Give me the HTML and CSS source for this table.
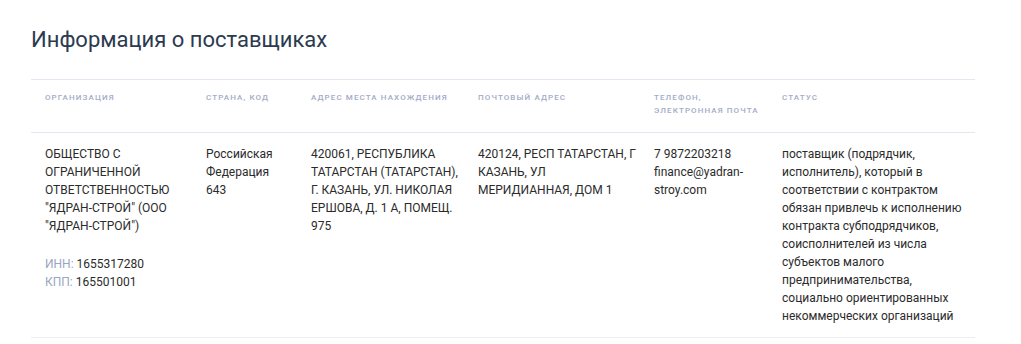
FILE: index.html
```html
<!DOCTYPE html>
<html lang="ru">
<head>
<meta charset="utf-8">
<link rel="stylesheet" href="styles.css">
</head>
<body>
<section class="panel">
  <h2 class="title">Информация о поставщиках</h2>
  <table class="suppliers">
    <colgroup>
      <col class="c1"><col class="c2"><col class="c3"><col class="c4"><col class="c5"><col class="c6">
    </colgroup>
    <thead>
      <tr>
        <th>Организация</th>
        <th>Страна, код</th>
        <th>Адрес места нахождения</th>
        <th>Почтовый адрес</th>
        <th>Телефон,<br>электронная почта</th>
        <th>Статус</th>
      </tr>
    </thead>
    <tbody>
      <tr>
        <td>
          <div>ОБЩЕСТВО С ОГРАНИЧЕННОЙ ОТВЕТСТВЕННОСТЬЮ "ЯДРАН-СТРОЙ" (ООО "ЯДРАН-СТРОЙ")</div>
          <div class="ids">
            <div><span class="lbl">ИНН:</span> 1655317280</div>
            <div><span class="lbl">КПП:</span> 165501001</div>
          </div>
        </td>
        <td>Российская Федерация<br>643</td>
        <td>420061, РЕСПУБЛИКА ТАТАРСТАН (ТАТАРСТАН), Г. КАЗАНЬ, УЛ. НИКОЛАЯ ЕРШОВА, Д. 1 А, ПОМЕЩ. 975</td>
        <td>420124, РЕСП ТАТАРСТАН, Г КАЗАНЬ, УЛ МЕРИДИАННАЯ, ДОМ 1</td>
        <td>7 9872203218<br>finance@yadran-stroy.com</td>
        <td>поставщик (подрядчик, исполнитель), который в соответствии с контрактом обязан привлечь к исполнению контракта субподрядчиков, соисполнителей из числа субъектов малого предпринимательства, социально ориентированных некоммерческих организаций</td>
      </tr>
    </tbody>
  </table>
</section>
</body>
</html>
```
FILE: styles.css
```css
* { box-sizing: border-box; }
body {
  margin: 0;
  background: #ffffff;
  font-family: Roboto, "Noto Sans", sans-serif;
  color: #2b2b2b;
}
.panel {
  padding: 24px 46px 0 31px;
}
.title {
  margin: 0 0 24px 0;
  font-size: 22px;
  font-weight: 400;
  line-height: 31px;
  color: #2c3a4f;
}
.suppliers {
  width: 944px;
  border-collapse: collapse;
  table-layout: fixed;
}
.c1 { width: 161px; }
.c2 { width: 105px; }
.c3 { width: 167px; }
.c4 { width: 176px; }
.c5 { width: 128px; }
.c6 { width: 207px; }
.suppliers th {
  text-align: left;
  vertical-align: top;
  padding: 11px 2px 15px 14px;
  border-top: 1px solid #e6e6f0;
  border-bottom: 1px solid #e6e6f0;
  font-size: 8px;
  font-weight: 500;
  line-height: 13px;
  letter-spacing: 1.1px;
  text-transform: uppercase;
  color: #a3abc6;
}
.suppliers td {
  vertical-align: top;
  padding: 12px 2px 12px 14px;
  border-bottom: 1px solid #ededed;
  font-size: 12px;
  line-height: 18px;
  color: #2b2b2b;
  overflow-wrap: break-word;
}
.ids {
  margin-top: 20px;
}
.lbl {
  color: #9aa6c2;
}
```
